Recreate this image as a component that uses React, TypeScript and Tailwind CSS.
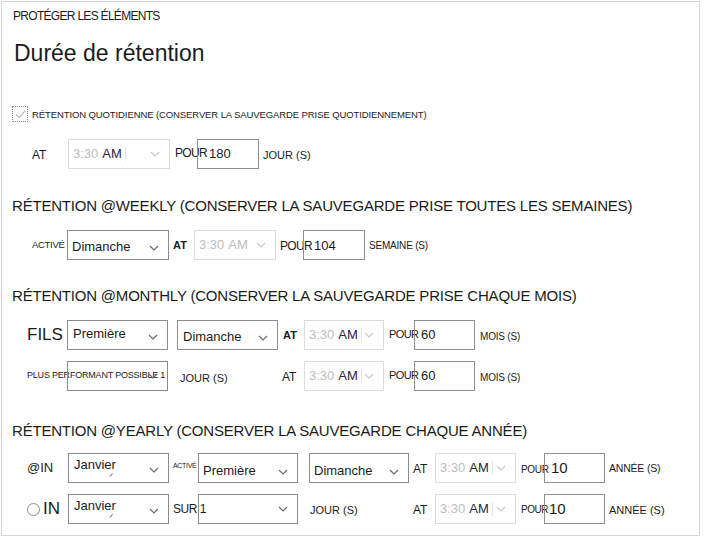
import React from "react";

const Chevron = ({ light = false }: { light?: boolean }) => (
  <svg width="10" height="6" viewBox="0 0 10 6" className="shrink-0">
    <path
      d="M1 1l4 4 4-4"
      fill="none"
      stroke={light ? "#c9c9c9" : "#6b6b6b"}
      strokeWidth="1.2"
    />
  </svg>
);

// enabled dropdown
const Select = ({
  className,
  children,
}: {
  className: string;
  children?: React.ReactNode;
}) => (
  <div
    className={`h-[30px] shrink-0 border border-[#8c8c8c] flex justify-between pr-[9px] text-[13px] text-[#1b1b1b] ${className}`}
  >
    <div className="flex-1 whitespace-nowrap">{children}</div>
    <div className="self-center">
      <Chevron />
    </div>
  </div>
);

// "Janvier" with the little stray mark under it
const Month = () => (
  <div className="flex flex-col">
    <span className="leading-[14px]">Janvier</span>
    <svg width="4" height="4" viewBox="0 0 4 4" className="ml-[35px] mt-[1px]">
      <path d="M3.5 0.5L1 3.5" stroke="#555" strokeWidth="1" />
    </svg>
  </div>
);

// greyed-out time picker
const TimeBox = ({ className, gray = false }: { className: string; gray?: boolean }) => (
  <div
    className={`h-[30px] shrink-0 border border-[#dcdcdc] flex items-center justify-between pl-[4px] pr-[9px] text-[13px] ${className}`}
  >
    <div className="flex items-center whitespace-nowrap">
      <span className="text-[#bdbdbd]">3:30</span>
      <span className={gray ? "ml-[4px] text-[#bdbdbd]" : "ml-[4px] text-[#2b2338]"}>AM</span>
      {!gray && <span className="ml-[3px] h-[14px] w-px bg-[#e4e4e4]" />}
    </div>
    <Chevron light />
  </div>
);

const NumInput = ({ className, children }: { className: string; children: React.ReactNode }) => (
  <div
    className={`h-[30px] shrink-0 border border-[#8f8f8f] bg-transparent flex items-center text-[#1b1b1b] ${className}`}
  >
    {children}
  </div>
);

export default function App() {
  return (
    <div
      className="w-[704px] h-[538px] bg-white text-[#1b1b1b] overflow-hidden"
      style={{ fontFamily: '"Liberation Sans", Arial, sans-serif' }}
    >
      <div className="ml-[1px] mt-[1px] w-[699px] h-[535px] border border-[#d6d6d6] flex flex-col">
        {/* header */}
        <div className="mt-[6px] h-[16px] pl-[11px] text-[12px] leading-[16px] tracking-[-0.7px] whitespace-nowrap">
          PROTÉGER LES ÉLÉMENTS
        </div>
        <div className="mt-[16px] h-[26px] pl-[12px] text-[23px] leading-[26px]">Durée de rétention</div>

        {/* daily */}
        <div className="mt-[38px] h-[20px] flex items-center">
          <div className="ml-[10px] w-[16px] h-[16px] border border-dotted border-[#8a8a8a] flex items-center justify-center">
            <svg width="11" height="9" viewBox="0 0 11 9">
              <path d="M1 4.5l3 3L10 1" fill="none" stroke="#b9b9b9" strokeWidth="1.2" />
            </svg>
          </div>
          <span className="ml-[4px] text-[9.5px] mt-[3px] whitespace-nowrap tracking-[-0.1px]">
            RÉTENTION QUOTIDIENNE (CONSERVER LA SAUVEGARDE PRISE QUOTIDIENNEMENT)
          </span>
        </div>
        <div className="mt-[15px] h-[30px] flex items-center">
          <span className="ml-[30px] w-[36px] text-[12px] pt-[2px]">AT</span>
          <TimeBox className="w-[102px]" />
          <span className="ml-[5px] w-[22px] text-[12px] tracking-[-0.7px] whitespace-nowrap -mt-[2px]">POUR</span>
          <NumInput className="w-[62px] pl-[11px] text-[13px] items-start pt-[4px]">180</NumInput>
          <span className="ml-[4px] text-[11px] pt-[2px]">JOUR (S)</span>
        </div>

        {/* weekly */}
        <div className="mt-[27px] h-[20px] pl-[10px] text-[15px] tracking-[-0.2px] leading-[20px] whitespace-nowrap">
          RÉTENTION @WEEKLY (CONSERVER LA SAUVEGARDE PRISE TOUTES LES SEMAINES)
        </div>
        <div className="mt-[14px] h-[30px] flex items-center">
          <span className="ml-[30px] w-[35px] text-[9.5px] tracking-[-0.3px] whitespace-nowrap">ACTIVÉ</span>
          <Select className="w-[102px] pl-[4px] pt-[6px]">Dimanche</Select>
          <span className="ml-[4px] w-[21px] text-[11px] font-bold">AT</span>
          <TimeBox className="w-[82px]" gray />
          <span className="ml-[4px] w-[23px] text-[12px] tracking-[-0.7px] whitespace-nowrap pt-[2px]">POUR</span>
          <NumInput className="w-[62px] pl-[10px] text-[13px] pt-[2px]">104</NumInput>
          <span className="ml-[4px] text-[10px] tracking-[-0.2px]">SEMAINE (S)</span>
        </div>

        {/* monthly */}
        <div className="mt-[26px] h-[20px] pl-[10px] text-[15px] tracking-[-0.2px] leading-[20px] whitespace-nowrap">
          RÉTENTION @MONTHLY (CONSERVER LA SAUVEGARDE PRISE CHAQUE MOIS)
        </div>
        <div className="mt-[14px] h-[30px] flex items-center">
          <span className="ml-[25px] w-[40px] text-[17px]">FILS</span>
          <Select className="w-[101px] pl-[5px] pt-[3px]">Première</Select>
          <Select className="ml-[9px] w-[101px] pl-[5px] pt-[6px]">Dimanche</Select>
          <span className="ml-[5px] w-[21px] text-[11px] font-bold">AT</span>
          <TimeBox className="w-[80px]" />
          <span className="ml-[5px] w-[25px] text-[11px] tracking-[-0.6px] whitespace-nowrap -mt-[2px]">POUR</span>
          <NumInput className="w-[61px] pl-[6px] text-[13px] items-start pt-[4px]">60</NumInput>
          <span className="ml-[5px] text-[10px] tracking-[-0.2px] pt-[2px]">MOIS (S)</span>
        </div>
        <div className="mt-[11px] h-[30px] flex items-center">
          <span className="ml-[25px] w-[40px] text-[9px] tracking-[-0.2px] whitespace-nowrap self-start mt-[8px]">
            PLUS PERFORMANT POSSIBLE 1
          </span>
          <Select className="w-[101px] bg-transparent" />
          <span className="ml-[12px] w-[102px] text-[11px] pt-[4px]">JOUR (S)</span>
          <span className="w-[22px] text-[12px] pt-[2px]">AT</span>
          <TimeBox className="w-[80px]" />
          <span className="ml-[5px] w-[25px] text-[11px] tracking-[-0.6px] whitespace-nowrap -mt-[2px]">POUR</span>
          <NumInput className="w-[61px] pl-[6px] text-[13px] items-start pt-[4px]">60</NumInput>
          <span className="ml-[5px] text-[10px] tracking-[-0.2px] pt-[2px]">MOIS (S)</span>
        </div>

        {/* yearly */}
        <div className="mt-[30px] h-[20px] pl-[10px] text-[15px] tracking-[-0.2px] leading-[20px] whitespace-nowrap">
          RÉTENTION @YEARLY (CONSERVER LA SAUVEGARDE CHAQUE ANNÉE)
        </div>
        <div className="mt-[12px] h-[30px] flex items-center">
          <span className="ml-[25px] w-[41px] text-[13px]">@IN</span>
          <Select className="w-[101px] pl-[5px] pt-[4px]">
            <Month />
          </Select>
          <span className="ml-[4px] w-[25px] text-[7px] tracking-[-0.3px] self-start mt-[8px] whitespace-nowrap">
            ACTIVÉ
          </span>
          <Select className="w-[100px] pl-[4px] pt-[7px] bg-transparent">Première</Select>
          <Select className="ml-[11px] w-[100px] pl-[4px] pt-[7px]">Dimanche</Select>
          <span className="ml-[4px] w-[22px] text-[12px] pt-[2px]">AT</span>
          <TimeBox className="w-[81px]" />
          <span className="ml-[5px] w-[23px] text-[10px] tracking-[-0.3px] whitespace-nowrap pt-[2px]">POUR</span>
          <NumInput className="w-[61px] pl-[6px] text-[15px] items-start pt-[3px]">10</NumInput>
          <span className="ml-[4px] text-[10.5px] tracking-[-0.2px] pt-[2px]">ANNÉE (S)</span>
        </div>
        <div className="mt-[11px] h-[30px] flex items-center">
          <div className="ml-[25px] w-[41px] flex items-center">
            <span className="w-[13px] h-[13px] rounded-full border border-[#8f8f8f]" />
            <span className="ml-[3px] text-[17px]">IN</span>
          </div>
          <Select className="w-[101px] pl-[5px] pt-[4px]">
            <Month />
          </Select>
          <span className="ml-[4px] w-[25px] text-[12px] tracking-[-0.5px] whitespace-nowrap">SUR 1</span>
          <Select className="w-[100px] bg-transparent" />
          <span className="ml-[12px] w-[103px] text-[11px] pt-[2px]">JOUR (S)</span>
          <span className="w-[22px] text-[12px] pt-[2px]">AT</span>
          <TimeBox className="w-[81px]" />
          <span className="ml-[5px] w-[23px] text-[10px] tracking-[-0.5px] whitespace-nowrap">POUR</span>
          <NumInput className="w-[61px] pl-[4px] text-[15px] items-start pt-[3px]">10</NumInput>
          <span className="ml-[4px] text-[11px] pt-[2px]">ANNÉE (S)</span>
        </div>
      </div>
    </div>
  );
}
